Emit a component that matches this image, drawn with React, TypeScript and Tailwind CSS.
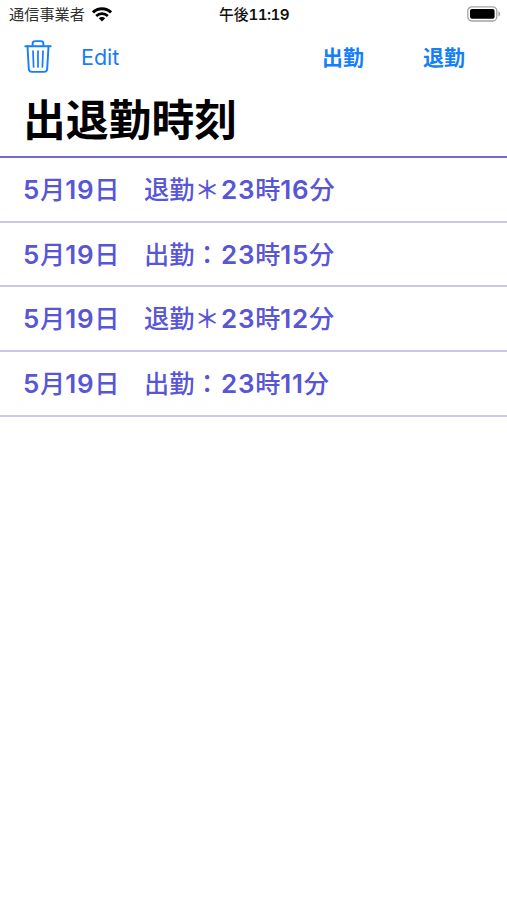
const records = [
  { month: '5', day: '19', kind: '退勤＊', hour: '23', minute: '16' },
  { month: '5', day: '19', kind: '出勤：', hour: '23', minute: '15' },
  { month: '5', day: '19', kind: '退勤＊', hour: '23', minute: '12' },
  { month: '5', day: '19', kind: '出勤：', hour: '23', minute: '11' },
];

function WifiIcon() {
  return (
    <svg width="20" height="15" viewBox="0 0 20 15" fill="none" stroke="#000" strokeWidth="3">
      <path d="M1 5.4a12.8 12.8 0 0 1 18 0" />
      <path d="M4.2 9a8.3 8.3 0 0 1 11.6 0" strokeWidth="2.6" />
      <path d="M10 14.6l-3.2-3.3a4.6 4.6 0 0 1 6.4 0z" fill="#000" stroke="none" />
    </svg>
  );
}

function BatteryIcon() {
  return (
    <svg width="34" height="16" viewBox="0 0 34 16" fill="none">
      <rect x="0.8" y="0.8" width="29" height="14.2" rx="4.2" stroke="#a3a3a3" strokeWidth="1.3" />
      <rect x="3" y="3" width="24.6" height="9.8" rx="2" fill="#000" />
      <path d="M31.4 5.3c2.3.8 2.3 4.4 0 5.2z" fill="#a3a3a3" />
    </svg>
  );
}

function TrashIcon() {
  return (
    <svg width="28" height="34" viewBox="0 0 28 34" fill="none" stroke="#147efb" strokeWidth="1.9" strokeLinecap="round" strokeLinejoin="round">
      <path d="M1.3 6.3h25.4" />
      <path d="M8.6 6V3.6c0-1.5 1-2.5 2.5-2.5h5.8c1.5 0 2.5 1 2.5 2.5V6" />
      <path d="M3.5 6.5l1.3 22.2c.1 2 1.3 3.2 3.2 3.2h12c1.9 0 3.1-1.2 3.2-3.2l1.3-22.2" />
      <path d="M9 11l.6 16M14 11v16M19 11l-.6 16" strokeWidth="1.7" />
    </svg>
  );
}

function Digits({ value }: { value: string }) {
  return <span className="text-[26px] font-semibold tracking-[0.7px]">{value}</span>;
}

export default function App() {
  return (
    <main className="h-[900px] w-[507px] overflow-hidden bg-white font-['Inter','Noto_Sans_CJK_JP',sans-serif]">
      <header className="flex h-7 items-center justify-between pl-[9px] pr-[6px] text-[15px] leading-7">
        <div className="flex w-[210px] items-center gap-[7px]">
          <span className="pt-px text-[15.2px] text-[#333]">通信事業者</span>
          <WifiIcon />
        </div>
        <div className="flex-1 whitespace-nowrap pt-px text-[14.8px] font-medium text-[#111]">
          午後<span className="text-[15.2px] font-semibold tabular-nums tracking-[-0.6px]">11:19</span>
        </div>
        <BatteryIcon />
      </header>

      <nav className="flex h-[58px] items-center pl-[24px] pr-[42px] text-[#147efb]">
        <button aria-label="Delete"><TrashIcon /></button>
        <button className="ml-[29px] text-[21.5px]">Edit</button>
        <div className="ml-auto flex gap-[59px] pt-[2px] text-[21px] font-bold">
          <button>出勤</button>
          <button>退勤</button>
        </div>
      </nav>

      <h1 className="h-[70px] pl-[23px] text-[42.8px] font-semibold leading-[70px] text-black">出退勤時刻</h1>

      <ul className="border-t-2 border-[#6f6dce] text-[25.2px] font-medium text-[#5856d6]">
        {records.map((record) => (
          <li key={record.minute} className="flex h-[64.7px] items-center border-b-2 border-[#cbc7ec] pl-[23px] pt-px">
            <div className="flex items-baseline whitespace-pre">
              <span className="w-[121px]">
                <Digits value={record.month} />月<Digits value={record.day} />日
              </span>
              <span className="w-[77px]">{record.kind}</span>
              <span>
                <Digits value={record.hour} />時<Digits value={record.minute} />分
              </span>
            </div>
          </li>
        ))}
      </ul>
    </main>
  );
}
